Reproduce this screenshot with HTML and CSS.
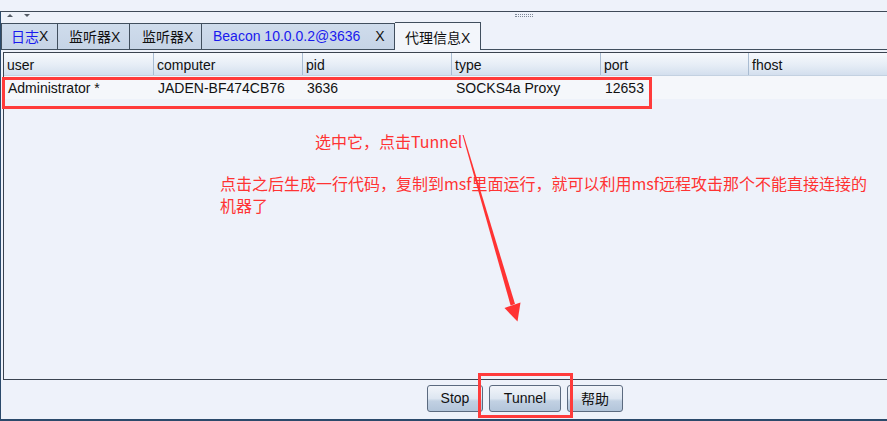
FILE: index.html
```html
<!DOCTYPE html>
<html lang="zh-CN">
<head>
<meta charset="utf-8">
<title>代理信息</title>
<link rel="stylesheet" href="styles.css">
</head>
<body>
<div class="app">
  <div class="topstrip"></div>
  <div class="frame">
    <div class="split">
      <svg class="arrows" width="24" height="5" viewBox="0 0 24 5">
        <polygon points="0,4 3,1 6,4" fill="#555c66"/>
        <polygon points="17,1 23,1 20,4" fill="#555c66"/>
      </svg>
      <span class="grip"></span>
    </div>
    <div class="tabs">
      <div class="tab t1"><span class="blue">日志</span>X</div>
      <div class="tab t2">监听器X</div>
      <div class="tab t3">监听器X</div>
      <div class="tab t4"><span class="blue">Beacon 10.0.0.2@3636</span><span class="x">X</span></div>
      <div class="tab active">代理信息X</div>
      <div class="tabfill"></div>
    </div>
    <div class="panel">
      <div class="table">
        <div class="thead">
          <div class="cell c1">user</div>
          <div class="cell c2">computer</div>
          <div class="cell c3">pid</div>
          <div class="cell c4">type</div>
          <div class="cell c5">port</div>
          <div class="cell c6">fhost</div>
        </div>
        <div class="row">
          <div class="cell c1">Administrator *</div>
          <div class="cell c2">JADEN-BF474CB76</div>
          <div class="cell c3">3636</div>
          <div class="cell c4">SOCKS4a Proxy</div>
          <div class="cell c5">12653</div>
          <div class="cell c6"></div>
        </div>
      </div>
    </div>
    <div class="buttons">
      <button class="btn b-stop">Stop</button>
      <button class="btn b-tunnel">Tunnel</button>
      <button class="btn b-help">帮助</button>
    </div>
  </div>

  <div class="mark mark-row"></div>
  <div class="mark mark-btn"></div>
  <div class="note note1">选中它，点击Tunnel</div>
  <div class="note note2">点击之后生成一行代码，复制到msf里面运行，就可以利用msf远程攻击那个不能直接连接的<br>机器了</div>
  <svg class="arrow" width="887" height="421" viewBox="0 0 887 421">
    <polygon points="462.5,135 463.6,135 515,304 510.6,305.5" fill="#ff3333"/>
    <polygon points="504.5,308 520.5,302.5 517.5,321.5" fill="#ff3333"/>
  </svg>
</div>
</body>
</html>
```
FILE: styles.css
```css
* { box-sizing: border-box; }
html, body { margin: 0; padding: 0; }
body {
  background: #eef2fa;
  font-family: "Liberation Sans", Arial, "Noto Sans CJK SC", sans-serif;
  font-size: 14px;
  color: #111;
}
.app {
  position: relative;
  width: 887px;
  height: 421px;
  overflow: hidden;
  background: #eef2fa;
}
.topstrip { height: 11px; }
.frame {
  height: 410px;
  border-top: 1px solid #3f4a58;
  border-left: 1px solid #2b4a6b;
  border-bottom: 2px solid #2b4a6b;
  display: flex;
  flex-direction: column;
}
.split {
  height: 10px;
  position: relative;
  display: flex;
  align-items: flex-start;
  padding-left: 6px;
  padding-top: 1px;
}
.arrows { display: block; }
.grip {
  position: absolute;
  left: 514px;
  top: 2px;
  width: 18px;
  height: 3px;
  border-top: 1px dotted #7d8796;
  border-bottom: 1px dotted #7d8796;
}
.tabs {
  height: 28px;
  display: flex;
  align-items: flex-end;
  font-family: "Liberation Sans", Arial, "Noto Sans CJK SC", sans-serif;
  font-size: 14px;
}
.tab {
  flex-shrink: 0;
  height: 27px;
  display: flex;
  align-items: center;
  background: linear-gradient(#cfdcec, #c6d4e6);
  border: 1px solid #414f5e;
  border-left: none;
  color: #111;
  white-space: nowrap;
  padding-bottom: 1px;
}
.t1 { width: 57px; padding-left: 9px; border-left: 1px solid #414f5e; }
.t2 { width: 72px; padding-left: 11px; }
.t3 { width: 72px; padding-left: 12px; }
.t4 { width: 193px; padding-left: 11px; }
.tab .x { margin-left: 15px; }
.blue { color: #1a1aee; }
.tab.active {
  width: 86px;
  height: 28px;
  padding-left: 10px;
  background: #f3f6fb;
  border-top: 1px solid #414f5e;
  border-right: 1px solid #414f5e;
  border-bottom: none;
  padding-bottom: 0;
}
.tabfill {
  flex: 1;
  height: 1px;
  border-bottom: 1px solid #414f5e;
}
.panel {
  height: 330px;
  padding-top: 2px;
  padding-left: 2px;
}
.table {
  height: 328px;
  border-left: 1px solid #3a4350;
  border-top: 1px solid #3a4350;
  border-bottom: 1px solid #3a4350;
  background: #eef2fa;
}
.thead {
  height: 23px;
  display: flex;
  background: linear-gradient(#f6f9fd, #e6edf6 55%, #d3dfee);
  border-bottom: 1px solid #c3d1e1;
}
.row {
  height: 23px;
  display: flex;
  background: #f5f7fb;
}
.cell {
  flex-shrink: 0;
  display: flex;
  align-items: center;
  padding-left: 4px;
  white-space: nowrap;
  color: #111;
}
.thead .cell { border-right: 1px solid #a9bcd2; padding-left: 3px; padding-top: 1px; }
.thead .c6 { border-right: none; }
.c1 { width: 150px; }
.c2 { width: 149px; }
.c3 { width: 149px; }
.c4 { width: 149px; }
.c5 { width: 148px; }
.c6 { flex: 1; }
.buttons {
  height: 39px;
  display: flex;
  align-items: flex-start;
  padding-top: 5px;
  padding-left: 426px;
  gap: 6px;
}
.btn {
  height: 27px;
  margin: 0;
  padding: 0 0 1px 0;
  border: 1px solid #5b6a7f;
  border-radius: 3px;
  background: linear-gradient(#f2f5fa, #dde6f1 50%, #c2d1e3 60%, #b3c5da);
  font-family: "Liberation Sans", Arial, "Noto Sans CJK SC", sans-serif;
  font-size: 14px;
  color: #111;
}
.b-stop { width: 56px; }
.b-tunnel { width: 72px; }
.b-help { width: 56px; }
.mark {
  position: absolute;
  border: 3px solid #ff3b3b;
}
.mark-row { left: 2px; top: 77px; width: 650px; height: 32px; }
.mark-btn { left: 478px; top: 373px; width: 95px; height: 45px; }
.note {
  position: absolute;
  color: #ff3333;
  font-family: "Noto Sans CJK SC", "Liberation Sans", sans-serif;
  font-size: 16px;
  line-height: 22px;
  white-space: nowrap;
}
.note1 { left: 315px; top: 130px; }
.note2 { left: 220px; top: 172px; }
.arrow { position: absolute; left: 0; top: 0; }
```
